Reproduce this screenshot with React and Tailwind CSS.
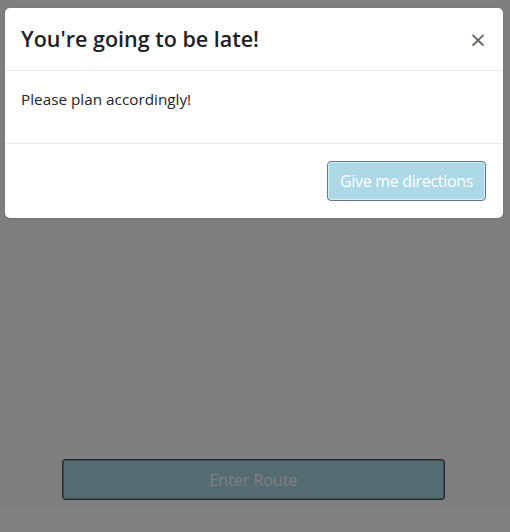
import React from 'react';

export default function App() {
  return (
    <div className="relative h-[532px] w-[510px] overflow-hidden bg-white font-['Open_Sans',sans-serif] text-[#212529]">
      {/* page under the modal */}
      <div className="flex flex-col items-center pt-[459px] pr-[3px]">
        <button className="h-[41px] w-[383px] rounded-[3px] border border-[#3f5560] bg-[#add8e6] text-[16px] text-white shadow-[inset_0_0_0_1px_#7e9ba6]">
          Enter Route
        </button>
      </div>

      {/* backdrop + modal */}
      <div className="absolute inset-0 bg-black/50">
        <div className="mx-[5px] mt-[8px] w-[498px] rounded-[5px] bg-white shadow-sm">
          <div className="flex items-start border-b border-[#e9ecef] p-4">
            <h5 className="text-[21.5px] font-semibold leading-[30px] text-[#1d2226]">You're going to be late!</h5>
            <button className="ml-auto mr-[1px] text-[28px] font-normal leading-[30px] text-black opacity-60">×</button>
          </div>
          <div className="p-4">
            <p className="mb-4 text-[15.3px] leading-[24px]">Please plan accordingly!</p>
          </div>
          <div className="flex justify-end border-t border-[#e9ecef] pl-4 pr-[17px] pt-[17px] pb-[17px]">
            <button className="h-[40px] w-[159px] rounded-[4px] border border-[#5e7886] bg-[#add8e6] text-[16px] tracking-[-0.3px] text-white shadow-[inset_0_0_0_1px_#d6eef5]">
              Give me directions
            </button>
          </div>
        </div>
      </div>
    </div>
  );
}
